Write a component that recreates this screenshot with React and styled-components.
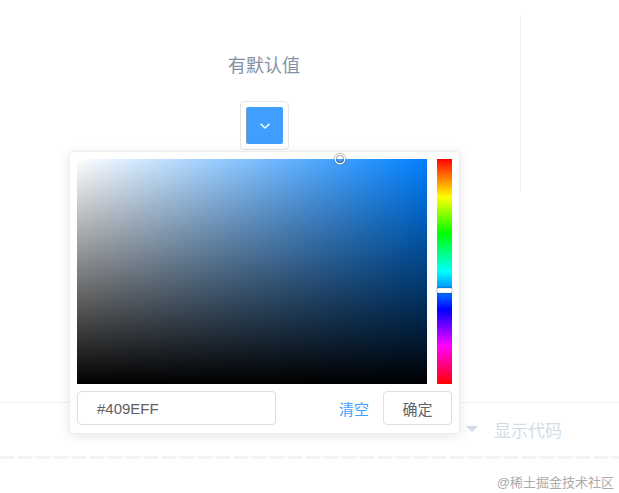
import React from "react";
import styled, { createGlobalStyle } from "styled-components";

const Global = createGlobalStyle`
  html, body { margin: 0; padding: 0; background: #fff; }
  body { font-family: "Liberation Sans", "Noto Sans CJK SC", sans-serif; }
  * { box-sizing: border-box; }
`;

const Page = styled.div`
  position: relative;
  width: 619px;
  height: 493px;
  overflow: hidden;
  background: #fff;
`;

const Source = styled.div`
  height: 403px;
  display: flex;
  align-items: flex-start;
  border-bottom: 1px solid #eef0f4;
`;

const Block = styled.div`
  margin-top: 15px;
  margin-left: 8px;
  width: 513px;
  height: 177px;
  border-right: 1px solid #eff1f4;
  display: flex;
  flex-direction: column;
  align-items: center;
  padding-top: 39px;
`;

const Title = styled.div`
  font-size: 18px;
  line-height: 24px;
  color: #8391a5;
  margin-bottom: 23px;
`;

const Trigger = styled.div`
  width: 49px;
  height: 49px;
  border: 1px solid #e6e6e6;
  border-radius: 4px;
  padding: 5px;
  display: flex;
`;

const Swatch = styled.div`
  flex: 1;
  background: #409eff;
  border-radius: 2px;
  border-left: 1px solid #7d9fc4;
  display: flex;
  align-items: center;
  justify-content: center;
`;

const Control = styled.div`
  height: 52px;
  display: flex;
  align-items: center;
  padding-left: 466px;
  gap: 16px;
  color: #d3dce6;
  font-size: 17px;
`;

const Caret = styled.span`
  width: 0;
  height: 0;
  border-left: 6px solid transparent;
  border-right: 6px solid transparent;
  border-top: 6px solid #d3dce6;
`;

const Strip = styled.div`
  height: 3px;
  margin-top: 1px;
  background: repeating-linear-gradient(90deg, #f1f3f7 0 14px, #fbfcfd 14px 18px);
`;

const Watermark = styled.div`
  display: flex;
  justify-content: flex-end;
  padding-right: 5px;
  margin-top: 13px;
  font-size: 13px;
  color: #ababab;
  text-shadow: 0 0 1px #fff;
`;

const Popover = styled.div`
  position: absolute;
  left: 69px;
  top: 151px;
  width: 391px;
  height: 283px;
  background: #fff;
  border: 1px solid #ebeef5;
  border-radius: 4px;
  box-shadow: 0 2px 12px rgba(0, 0, 0, 0.1);
  padding: 7px;
  display: flex;
  flex-direction: column;
  gap: 7px;
`;

const Pickers = styled.div`
  display: flex;
  gap: 10px;
  height: 225px;
`;

const Saturation = styled.div`
  position: relative;
  width: 350px;
  height: 225px;
  background:
    linear-gradient(to top, #000, rgba(0, 0, 0, 0)),
    linear-gradient(to right, #fff, rgba(255, 255, 255, 0)),
    hsl(${(p) => p.$hue}, 100%, 50%);
`;

const Cursor = styled.div`
  position: absolute;
  width: 8px;
  height: 8px;
  margin: -4px 0 0 -4px;
  border-radius: 50%;
  box-shadow: 0 0 0 1.5px #fff, inset 0 0 1px 1px rgba(0, 0, 0, 0.3), 0 0 1px 2px rgba(0, 0, 0, 0.4);
`;

const Hue = styled.div`
  position: relative;
  width: 15px;
  height: 225px;
  background: linear-gradient(
    to bottom,
    #f00 0%, #ff0 17%, #0f0 33%, #0ff 50%, #00f 67%, #f0f 83%, #f00 100%
  );
`;

const HueThumb = styled.div`
  position: absolute;
  left: 0;
  width: 15px;
  height: 5px;
  margin-top: -2px;
  background: #fff;
  border: 1px solid #f0f0f0;
  box-shadow: 0 0 2px rgba(0, 0, 0, 0.5);
  border-radius: 1px;
`;

const Footer = styled.div`
  display: flex;
  align-items: center;
  height: 34px;
`;

const Input = styled.div`
  width: 199px;
  height: 34px;
  border: 1px solid #dcdfe6;
  border-radius: 4px;
  padding-left: 19px;
  display: flex;
  align-items: center;
  font-size: 15px;
  color: #606266;
`;

const TextButton = styled.span`
  margin-left: auto;
  margin-right: 14px;
  color: #409eff;
  font-size: 15px;
`;

const Button = styled.div`
  width: 69px;
  height: 34px;
  border: 1px solid #dcdfe6;
  border-radius: 4px;
  display: flex;
  align-items: center;
  justify-content: center;
  font-size: 15px;
  color: #606266;
`;

export default function App() {
  const hue = 210;
  const sat = 0.75;
  const val = 1;
  return (
    <Page>
      <Global />
      <Source>
        <Block>
          <Title>有默认值</Title>
          <Trigger>
            <Swatch>
              <svg width="12" height="8" viewBox="0 0 12 8">
                <path d="M1.5 1.8 L6 6 L10.5 1.8" fill="none" stroke="#fff" strokeWidth="1.4" />
              </svg>
            </Swatch>
          </Trigger>
        </Block>
      </Source>
      <Control>
        <Caret />
        <span>显示代码</span>
      </Control>
      <Strip />
      <Watermark>@稀土掘金技术社区</Watermark>
      <Popover>
        <Pickers>
          <Saturation $hue={hue}>
            <Cursor style={{ left: `${sat * 100}%`, top: `${(1 - val) * 100}%` }} />
          </Saturation>
          <Hue>
            <HueThumb style={{ top: `${(hue / 360) * 100}%` }} />
          </Hue>
        </Pickers>
        <Footer>
          <Input>#409EFF</Input>
          <TextButton>清空</TextButton>
          <Button>确定</Button>
        </Footer>
      </Popover>
    </Page>
  );
}
